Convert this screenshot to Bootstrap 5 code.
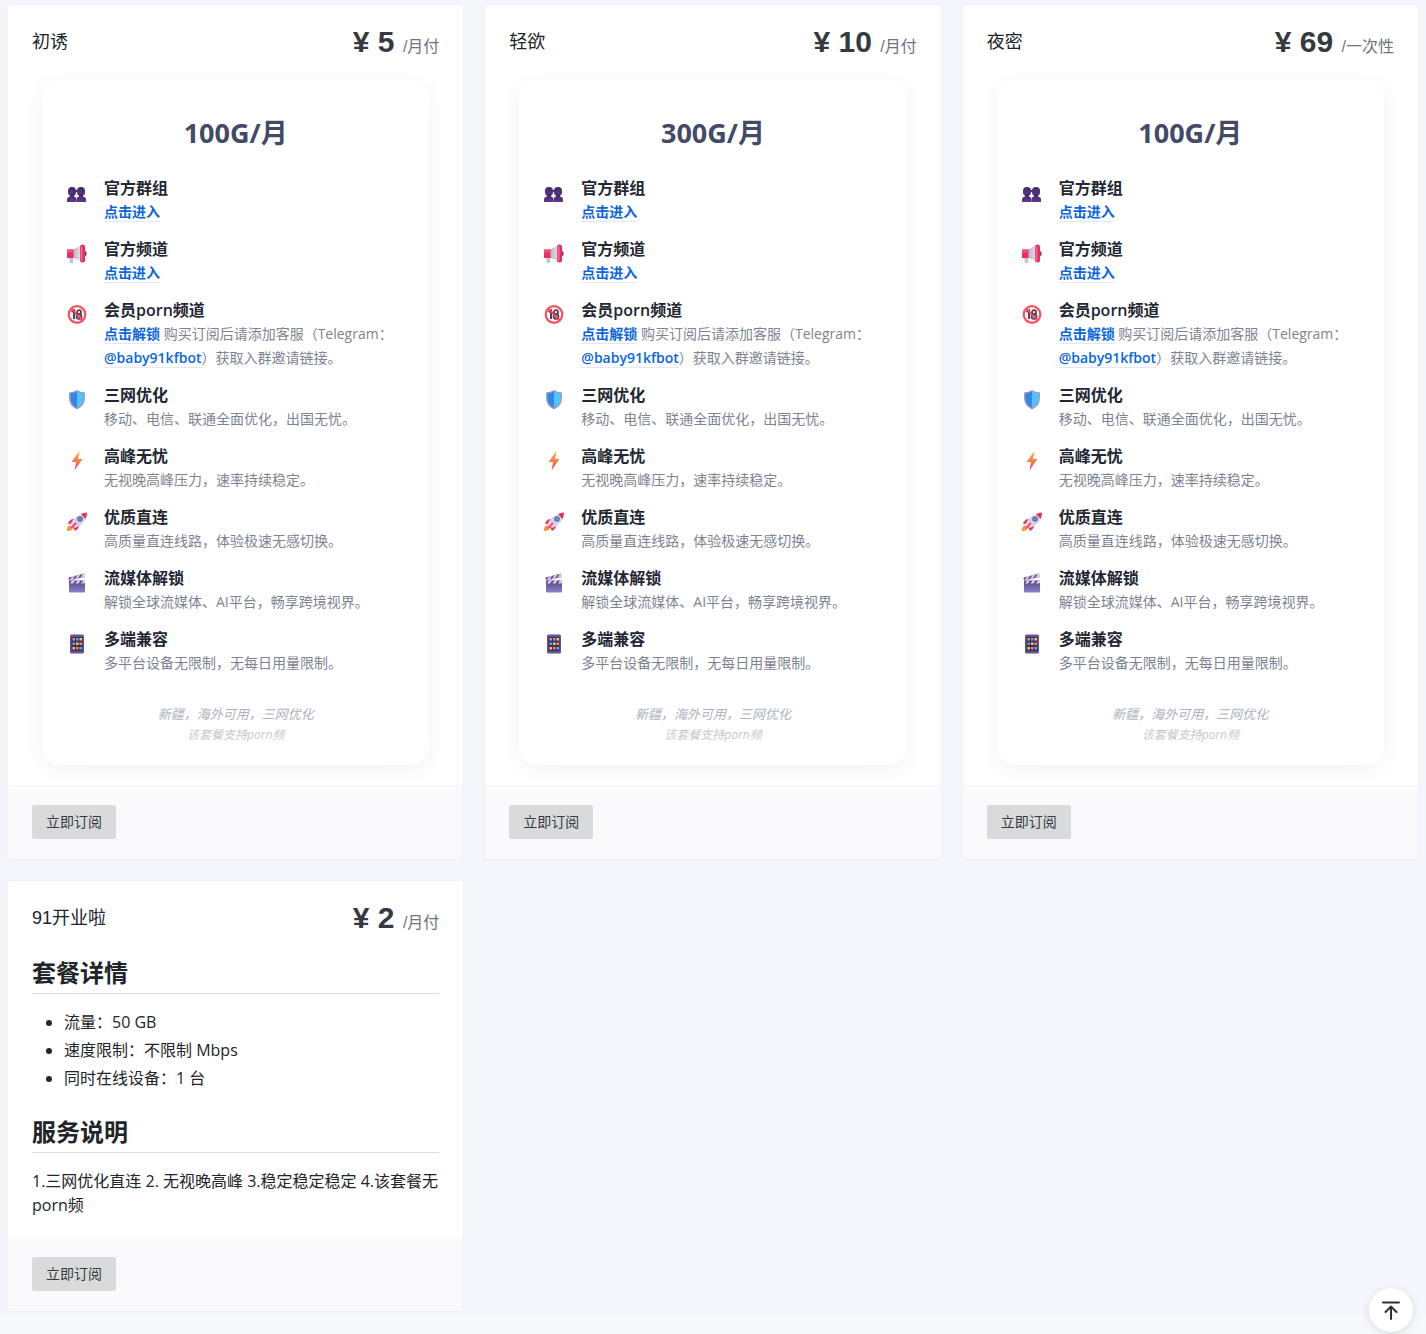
<!DOCTYPE html>
<html lang="zh-CN">
<head>
<meta charset="utf-8">
<meta name="viewport" content="width=device-width, initial-scale=1">
<title>订阅套餐</title>
<link href="https://cdn.jsdelivr.net/npm/bootstrap@5.3.0/dist/css/bootstrap.min.css" rel="stylesheet">
<style>
body{background:#f7f8fb;font-family:"Open Sans","Noto Sans CJK SC",sans-serif;color:#212529}
.plans-area{background:#f4f6fc;padding:5px 8px}
.plans-row{--bs-gutter-x:22px;--bs-gutter-y:22px}
.plan{--bs-card-border-width:0;--bs-card-border-radius:2px;--bs-card-inner-border-radius:2px;box-shadow:0 0 2px rgba(60,64,100,.1)}
.plan-head{height:75px;padding:0 24px}
.plan-name,.plan-price,.plan-period{font-family:"Liberation Sans","Noto Sans CJK SC",sans-serif}
.plan-name{font-size:18px;line-height:27px;font-weight:400}
.plan-price{font-size:30px;line-height:36px;font-weight:700;color:#343a40;padding-top:3px}
.plan-period{font-size:16px;font-weight:400;color:#6c757d}
.plan-foot{background:#fafafc;padding:20px 24px;border:0}
.btn-order{--bs-btn-bg:#d9dadc;--bs-btn-color:#343a40;--bs-btn-hover-bg:#cfd0d2;--bs-btn-hover-color:#343a40;--bs-btn-border-width:0;--bs-btn-border-radius:2px;--bs-btn-padding-x:14px;--bs-btn-padding-y:6px;--bs-btn-font-size:14px;--bs-btn-line-height:22px}
.feature-box{margin:0 34px 20px;padding:34px 24px 20px;border-radius:18px;box-shadow:0 4px 20px rgba(0,0,0,.06)}
.feature-title{font-size:27px;line-height:38px;margin-bottom:24px;font-weight:700;color:#434a66}
.feature-list{display:grid;gap:13px;margin-bottom:29px}
.feature-list li{display:flex;gap:16px}
.feature-list svg{width:22px;height:20px;margin-top:7px;flex:none}
.feature-list h3{font-size:16px;line-height:24px;font-weight:600;margin:0;color:#232733}
.feature-list p{font-size:14px;line-height:24px;margin:0;color:#7d8491}
.feature-list a{color:#0b66dc;font-weight:600;text-decoration:none;border-bottom:1px solid #e0e9fb}
.feature-note{font-size:13px;line-height:20px;color:#adb3be}
.feature-subnote{font-size:12px;line-height:21px;color:#c4c9d1}
.plan-text{padding:0 24px 20px;font-size:16px;line-height:24px}
.plan-text h2{font-size:24px;line-height:34px;font-weight:700;padding-bottom:3px;margin-bottom:16px;border-bottom:1px solid #d8dde6}
.plan-text ul{padding-left:32px;margin-bottom:25px}
.plan-text li+li{margin-top:4px}
.back-top{right:13px;bottom:2px;width:44px;height:44px;background:#fff;box-shadow:0 2px 8px rgba(0,0,0,.12)}
</style>
<script src="https://cdn.jsdelivr.net/npm/bootstrap@5.3.0/dist/js/bootstrap.bundle.min.js"></script>
</head>
<body>
<svg width="0" height="0" class="position-absolute" aria-hidden="true">
<defs>
<linearGradient id="gp" x1="0" y1="0" x2="0" y2="1"><stop offset="0" stop-color="#402a63"/><stop offset="1" stop-color="#61368f"/></linearGradient>
<linearGradient id="gb" x1="0" y1="0" x2="0" y2="1"><stop offset="0" stop-color="#ffb13d"/><stop offset="1" stop-color="#f4485c"/></linearGradient>
<linearGradient id="gc" x1="0" y1="0" x2="0" y2="1"><stop offset="0" stop-color="#5b4384"/><stop offset="1" stop-color="#8583c9"/></linearGradient>
<linearGradient id="gm" x1="0" y1="0" x2="1" y2="0"><stop offset="0" stop-color="#b9b2c4"/><stop offset="1" stop-color="#e4e0ea"/></linearGradient>
<symbol id="i-group" viewBox="0 0 22 20"><g fill="url(#gp)"><rect x="2" y="4" width="8" height="9" rx="3.800"/><rect x="11" y="4" width="8" height="9" rx="3.800"/><path d="M1 19v-2.500q0-2.500 3-3V11h4v2.500q2.500.5 2.500 3V19z"/><path d="M10.500 19v-2.500q0-2.500 2.500-3V11h4v2.500q3 .5 3 3V19z"/><path d="M9 7h3v2H9z"/></g></symbol>
<symbol id="i-horn" viewBox="0 0 22 20"><path d="M3 12h4v7H4z" fill="#c8bfdb"/><path d="M7 5.500L15 1.500v15L7 14z" fill="url(#gm)"/><path d="M1 5.500h6.500V14H1z" fill="#e92f68"/><path d="M1 5.500h6.500v3H1z" fill="#f4527c"/><rect x="17.500" y="7" width="3" height="5" rx="1.500" fill="#5b4d73"/><rect x="14" y=".5" width="5" height="18" rx="2.500" fill="#e82b67"/><rect x="14.500" y="2" width="2" height="15" rx="1" fill="#f66b86"/></symbol>
<symbol id="i-adult" viewBox="0 0 22 20"><circle cx="11" cy="9.500" r="8.300" fill="#f7f5f9"/><path d="M5.500 7L8 5.500V14" fill="none" stroke="#49444f" stroke-width="2"/><circle cx="13" cy="7.200" r="2" fill="none" stroke="#49444f" stroke-width="1.800"/><circle cx="13" cy="11.500" r="2.400" fill="none" stroke="#49444f" stroke-width="1.800"/><path d="M5 3.500l12 12" stroke="#f2425b" stroke-width="2"/><circle cx="11" cy="9.500" r="8.300" fill="none" stroke="#f65264" stroke-width="2.200"/></symbol>
<symbol id="i-shield" viewBox="0 0 22 20"><path d="M11 0q3.500 2 8 2.500V8q0 8-8 11.500Q3 16 3 8V2.500Q7.500 2 11 0z" fill="#9ba0b8"/><path d="M11 1.500Q8 3 4.500 3.500V8q0 6.500 6.500 10z" fill="#3485e8"/><path d="M11 1.500q3 1.500 6.500 2V8q0 6.500-6.500 10z" fill="#50c4fb"/></symbol>
<symbol id="i-bolt" viewBox="0 0 22 20"><path d="M13 .5L5.500 11H10L8.500 19.500 16.500 8H12l1.500-7z" fill="url(#gb)"/></symbol>
<symbol id="i-rocket" viewBox="0 0 22 20"><path d="M1 19q-.5-4 2.500-6l3.500 3.500Q5 19.500 1 19z" fill="#fb9830"/><path d="M8 7q-4-.5-6 4.500l4 1z" fill="#e7326b"/><path d="M13 12q1 4-4 7l-2-4z" fill="#e7326b"/><path d="M4.500 12Q8 4 16 2l4 4q-2.500 7-11 10z" fill="#dcd3e1"/><path d="M15 2q3-1.500 6-1.500Q21 4 19.500 7z" fill="#e92f55"/><circle cx="14" cy="7" r="2.800" fill="#626b91"/><circle cx="14" cy="7" r="1.800" fill="#3e98ec"/><path d="M5 16l5-5" stroke="#ef4d80" stroke-width="2"/></symbol>
<symbol id="i-clap" viewBox="0 0 22 20"><path d="M2.500 4.500L18 .5l.5 3.500L3 7.500z" fill="#6b5594"/><path d="M6 3.600l3-.8-2.500 3.900-3 .7zM11.500 2.200l3-.8-2.500 3.900-3 .7zM16.500 1L18 .5l.5 3.500-4 1z" fill="#cfc6ea"/><rect x="3" y="7.500" width="16" height="12" rx="1" fill="url(#gc)"/><path d="M6 7.500h3L7 10.500H4zM11.500 7.500h3l-2 3h-3zM17 7.500h2v2l-1 1h-3z" fill="#d8d0ef"/></symbol>
<symbol id="i-phone" viewBox="0 0 22 20"><rect x="4" y=".5" width="14" height="19" rx="1.500" fill="#655096"/><rect x="5.500" y="3" width="11" height="14" fill="#3e2c62"/><path d="M6.500 4H9v2.500H6.500zM13.500 8.500H16V11h-2.500zM10 13h2.500v2.500H10z" fill="#ff8a35"/><path d="M10 4h2.500v2.500H10zM6.500 8.500H9V11H6.500zM13.500 13H16v2.500h-2.500z" fill="#39b4f5"/><path d="M13.500 4H16v2.500h-2.500zM10 8.500h2.500V11H10zM6.500 13H9v2.500H6.500z" fill="#ffc83d"/></symbol>
</defs>
</svg>

<main class="plans-area overflow-hidden">
<div class="row plans-row">

<div class="col-12 col-md-6 col-lg-4">
<article class="card plan h-100">
<header class="plan-head d-flex align-items-center justify-content-between"><span class="plan-name">初诱</span><span class="plan-price">¥ 5 <span class="plan-period">/月付</span></span></header>
<section class="feature-box">
<h2 class="feature-title text-center">100G/月</h2>
<ul class="feature-list list-unstyled">
<li><svg><use href="#i-group"/></svg><div><h3>官方群组</h3><p><a href="#">点击进入</a></p></div></li>
<li><svg><use href="#i-horn"/></svg><div><h3>官方频道</h3><p><a href="#">点击进入</a></p></div></li>
<li><svg><use href="#i-adult"/></svg><div><h3>会员porn频道</h3><p><a href="#">点击解锁</a> 购买订阅后请添加客服（Telegram：<a href="#">@baby91kfbot</a>）获取入群邀请链接。</p></div></li>
<li><svg><use href="#i-shield"/></svg><div><h3>三网优化</h3><p>移动、电信、联通全面优化，出国无忧。</p></div></li>
<li><svg><use href="#i-bolt"/></svg><div><h3>高峰无忧</h3><p>无视晚高峰压力，速率持续稳定。</p></div></li>
<li><svg><use href="#i-rocket"/></svg><div><h3>优质直连</h3><p>高质量直连线路，体验极速无感切换。</p></div></li>
<li><svg><use href="#i-clap"/></svg><div><h3>流媒体解锁</h3><p>解锁全球流媒体、AI平台，畅享跨境视界。</p></div></li>
<li><svg><use href="#i-phone"/></svg><div><h3>多端兼容</h3><p>多平台设备无限制，无每日用量限制。</p></div></li>
</ul>
<div class="feature-note fst-italic text-center">新疆，海外可用，三网优化</div>
<div class="feature-subnote fst-italic text-center">该套餐支持porn频</div>
</section>
<footer class="card-footer plan-foot mt-auto"><button type="button" class="btn btn-order">立即订阅</button></footer>
</article>
</div>

<div class="col-12 col-md-6 col-lg-4">
<article class="card plan h-100">
<header class="plan-head d-flex align-items-center justify-content-between"><span class="plan-name">轻欲</span><span class="plan-price">¥ 10 <span class="plan-period">/月付</span></span></header>
<section class="feature-box">
<h2 class="feature-title text-center">300G/月</h2>
<ul class="feature-list list-unstyled">
<li><svg><use href="#i-group"/></svg><div><h3>官方群组</h3><p><a href="#">点击进入</a></p></div></li>
<li><svg><use href="#i-horn"/></svg><div><h3>官方频道</h3><p><a href="#">点击进入</a></p></div></li>
<li><svg><use href="#i-adult"/></svg><div><h3>会员porn频道</h3><p><a href="#">点击解锁</a> 购买订阅后请添加客服（Telegram：<a href="#">@baby91kfbot</a>）获取入群邀请链接。</p></div></li>
<li><svg><use href="#i-shield"/></svg><div><h3>三网优化</h3><p>移动、电信、联通全面优化，出国无忧。</p></div></li>
<li><svg><use href="#i-bolt"/></svg><div><h3>高峰无忧</h3><p>无视晚高峰压力，速率持续稳定。</p></div></li>
<li><svg><use href="#i-rocket"/></svg><div><h3>优质直连</h3><p>高质量直连线路，体验极速无感切换。</p></div></li>
<li><svg><use href="#i-clap"/></svg><div><h3>流媒体解锁</h3><p>解锁全球流媒体、AI平台，畅享跨境视界。</p></div></li>
<li><svg><use href="#i-phone"/></svg><div><h3>多端兼容</h3><p>多平台设备无限制，无每日用量限制。</p></div></li>
</ul>
<div class="feature-note fst-italic text-center">新疆，海外可用，三网优化</div>
<div class="feature-subnote fst-italic text-center">该套餐支持porn频</div>
</section>
<footer class="card-footer plan-foot mt-auto"><button type="button" class="btn btn-order">立即订阅</button></footer>
</article>
</div>

<div class="col-12 col-md-6 col-lg-4">
<article class="card plan h-100">
<header class="plan-head d-flex align-items-center justify-content-between"><span class="plan-name">夜密</span><span class="plan-price">¥ 69 <span class="plan-period">/一次性</span></span></header>
<section class="feature-box">
<h2 class="feature-title text-center">100G/月</h2>
<ul class="feature-list list-unstyled">
<li><svg><use href="#i-group"/></svg><div><h3>官方群组</h3><p><a href="#">点击进入</a></p></div></li>
<li><svg><use href="#i-horn"/></svg><div><h3>官方频道</h3><p><a href="#">点击进入</a></p></div></li>
<li><svg><use href="#i-adult"/></svg><div><h3>会员porn频道</h3><p><a href="#">点击解锁</a> 购买订阅后请添加客服（Telegram：<a href="#">@baby91kfbot</a>）获取入群邀请链接。</p></div></li>
<li><svg><use href="#i-shield"/></svg><div><h3>三网优化</h3><p>移动、电信、联通全面优化，出国无忧。</p></div></li>
<li><svg><use href="#i-bolt"/></svg><div><h3>高峰无忧</h3><p>无视晚高峰压力，速率持续稳定。</p></div></li>
<li><svg><use href="#i-rocket"/></svg><div><h3>优质直连</h3><p>高质量直连线路，体验极速无感切换。</p></div></li>
<li><svg><use href="#i-clap"/></svg><div><h3>流媒体解锁</h3><p>解锁全球流媒体、AI平台，畅享跨境视界。</p></div></li>
<li><svg><use href="#i-phone"/></svg><div><h3>多端兼容</h3><p>多平台设备无限制，无每日用量限制。</p></div></li>
</ul>
<div class="feature-note fst-italic text-center">新疆，海外可用，三网优化</div>
<div class="feature-subnote fst-italic text-center">该套餐支持porn频</div>
</section>
<footer class="card-footer plan-foot mt-auto"><button type="button" class="btn btn-order">立即订阅</button></footer>
</article>
</div>

<div class="col-12 col-md-6 col-lg-4">
<article class="card plan h-100">
<header class="plan-head d-flex align-items-center justify-content-between"><span class="plan-name">91开业啦</span><span class="plan-price">¥ 2 <span class="plan-period">/月付</span></span></header>
<section class="plan-text">
<h2>套餐详情</h2>
<ul>
<li>流量：50 GB</li>
<li>速度限制：不限制 Mbps</li>
<li>同时在线设备：1 台</li>
</ul>
<h2>服务说明</h2>
<p class="mb-0">1.三网优化直连 2. 无视晚高峰 3.稳定稳定稳定 4.该套餐无porn频</p>
</section>
<footer class="card-footer plan-foot mt-auto"><button type="button" class="btn btn-order">立即订阅</button></footer>
</article>
</div>

</div>
</main>

<button type="button" class="back-top btn position-fixed rounded-circle border-0 p-0 d-flex align-items-center justify-content-center" aria-label="返回顶部">
<svg width="20" height="22" viewBox="0 0 20 22" fill="none" stroke="#2d3035" stroke-width="2" stroke-linecap="round" stroke-linejoin="round"><path d="M2 3.500h16M10 20V8M4.500 13L10 7.500l5.500 5.500"/></svg>
</button>
</body>
</html>
